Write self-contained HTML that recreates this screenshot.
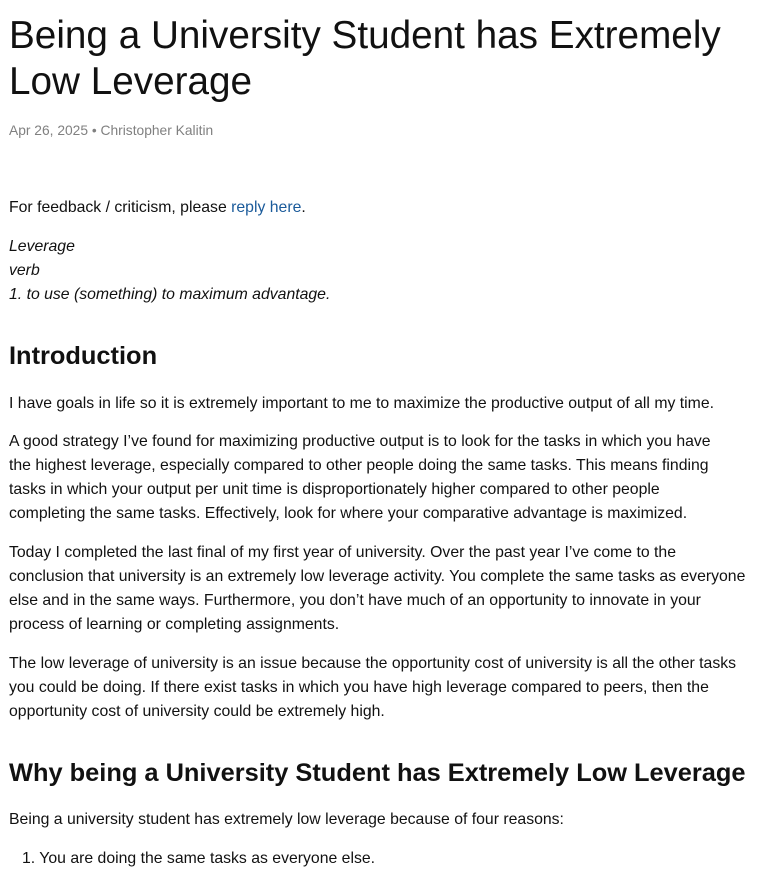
<!DOCTYPE html>
<html><head><meta charset="utf-8">
<style>
html,body{margin:0;padding:0;background:#fff;}
body{width:776px;height:864px;overflow:hidden;font-family:"Liberation Sans",sans-serif;color:#111;position:relative;}
.l{position:absolute;left:9px;white-space:nowrap;}
h1{position:absolute;left:9px;top:13px;margin:0;font-weight:normal;font-size:38.7px;line-height:46px;white-space:nowrap;color:#111;}
.meta{font-size:13.8px;color:#808080;top:123px;}
.p{font-size:15.8px;line-height:24px;}
i{font-style:italic;}
a{color:#1a5a9a;text-decoration:none;}
.h{font-weight:bold;font-size:25.4px;}
</style></head><body>
<h1>Being a University Student has Extremely<br>Low Leverage</h1>
<div class="l meta">Apr 26, 2025 • Christopher Kalitin</div>
<div class="l p" style="top:196px">For feedback / criticism, please <a>reply here</a>.</div>
<div class="l p" style="top:235px"><i>Leverage<br>verb<br>1. to use (something) to maximum advantage.</i></div>
<div class="l h" style="top:342px">Introduction</div>
<div class="l p" style="top:392px">I have goals in life so it is extremely important to me to maximize the productive output of all my time.</div>
<div class="l p" style="top:430px">A good strategy I’ve found for maximizing productive output is to look for the tasks in which you have<br>the highest leverage, especially compared to other people doing the same tasks. This means finding<br>tasks in which your output per unit time is disproportionately higher compared to other people<br>completing the same tasks. Effectively, look for where your comparative advantage is maximized.</div>
<div class="l p" style="top:541px">Today I completed the last final of my first year of university. Over the past year I’ve come to the<br>conclusion that university is an extremely low leverage activity. You complete the same tasks as everyone<br>else and in the same ways. Furthermore, you don’t have much of an opportunity to innovate in your<br>process of learning or completing assignments.</div>
<div class="l p" style="top:652px">The low leverage of university is an issue because the opportunity cost of university is all the other tasks<br>you could be doing. If there exist tasks in which you have high leverage compared to peers, then the<br>opportunity cost of university could be extremely high.</div>
<div class="l h" style="top:759px">Why being a University Student has Extremely Low Leverage</div>
<div class="l p" style="top:808px">Being a university student has extremely low leverage because of four reasons:</div>
<div class="l p" style="top:847px;left:22px">1. You are doing the same tasks as everyone else.</div>
</body></html>
